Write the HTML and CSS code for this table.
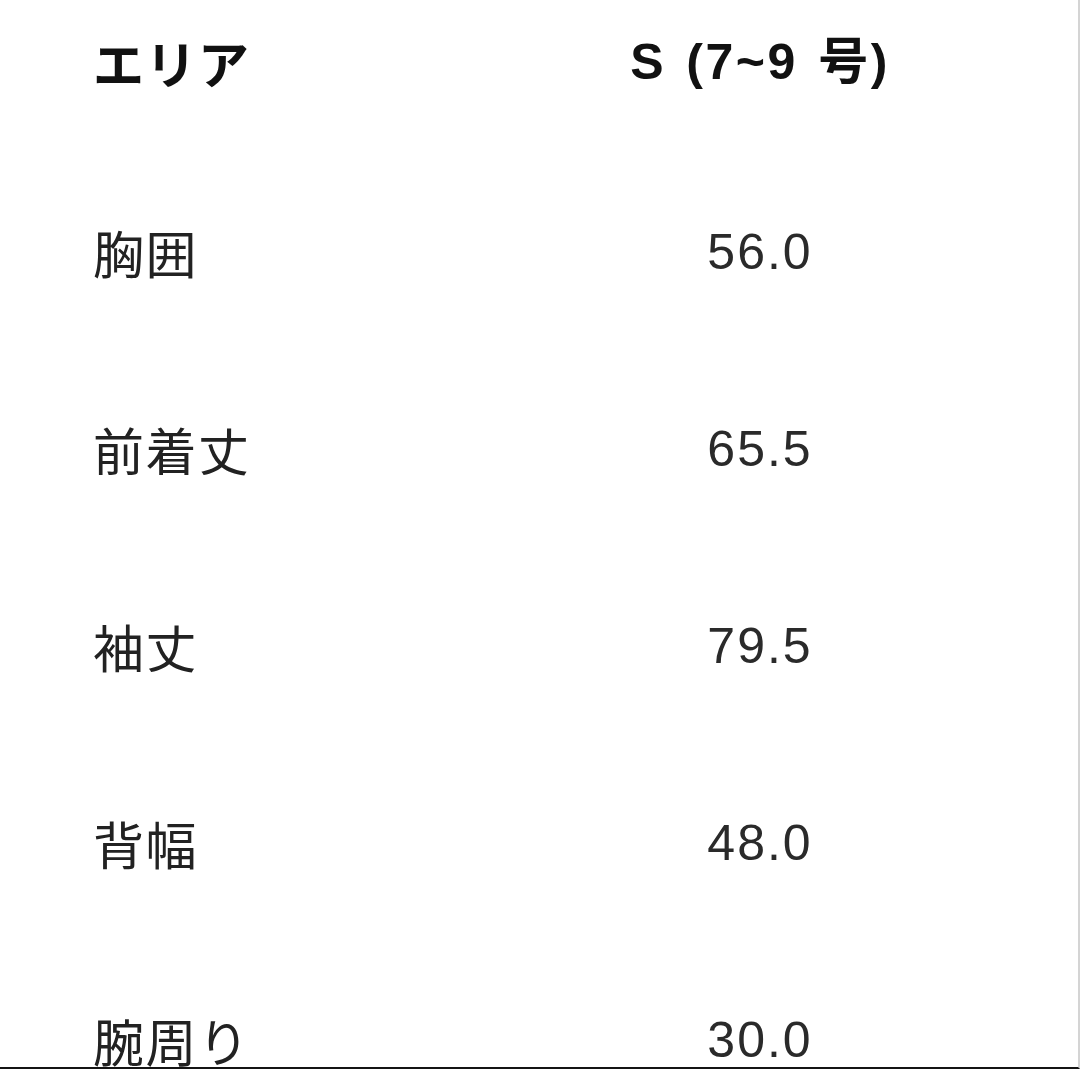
FILE: index.html
```html
<!DOCTYPE html>
<html lang="ja">
<head>
<meta charset="utf-8">
<link rel="stylesheet" href="styles.css">
</head>
<body>
<div class="page">
  <div class="table">
    <div class="row head">
      <div class="label">エリア</div>
      <div class="value">S (7~9 号)</div>
    </div>
    <div class="row">
      <div class="label">胸囲</div>
      <div class="value">56.0</div>
    </div>
    <div class="row">
      <div class="label">前着丈</div>
      <div class="value">65.5</div>
    </div>
    <div class="row">
      <div class="label">袖丈</div>
      <div class="value">79.5</div>
    </div>
    <div class="row">
      <div class="label">背幅</div>
      <div class="value">48.0</div>
    </div>
    <div class="row">
      <div class="label">腕周り</div>
      <div class="value">30.0</div>
    </div>
  </div>
</div>
</body>
</html>
```
FILE: styles.css
```css
html, body {
  margin: 0;
  padding: 0;
  background: #ffffff;
}
.page {
  width: 1080px;
  height: 1069px;
  box-sizing: border-box;
  border-right: 2px solid #d4d4d4;
  border-bottom: 2px solid #141414;
  overflow: hidden;
  background: #ffffff;
}
.table {
  display: flex;
  flex-direction: column;
  gap: 145px;
  padding: 36px 0 0 93px;
}
.row {
  display: flex;
  height: 52px;
  align-items: center;
  color: #222222;
}
.row.head {
  margin-bottom: -7px;
  color: #111111;
}
.label {
  width: 507px;
  font-family: "Noto Sans CJK JP", sans-serif;
  font-size: 51px;
  line-height: 52px;
  letter-spacing: 1.5px;
}
.value {
  width: 320px;
  text-align: center;
  font-family: "Liberation Sans", "Noto Sans CJK JP", sans-serif;
  font-size: 50px;
  line-height: 52px;
  letter-spacing: 2px;
  color: #2a2a2a;
}
.head .label {
  font-weight: 700;
}
.head .value {
  font-weight: 700;
  letter-spacing: 2.5px;
  word-spacing: 4px;
  color: #111111;
}
```
